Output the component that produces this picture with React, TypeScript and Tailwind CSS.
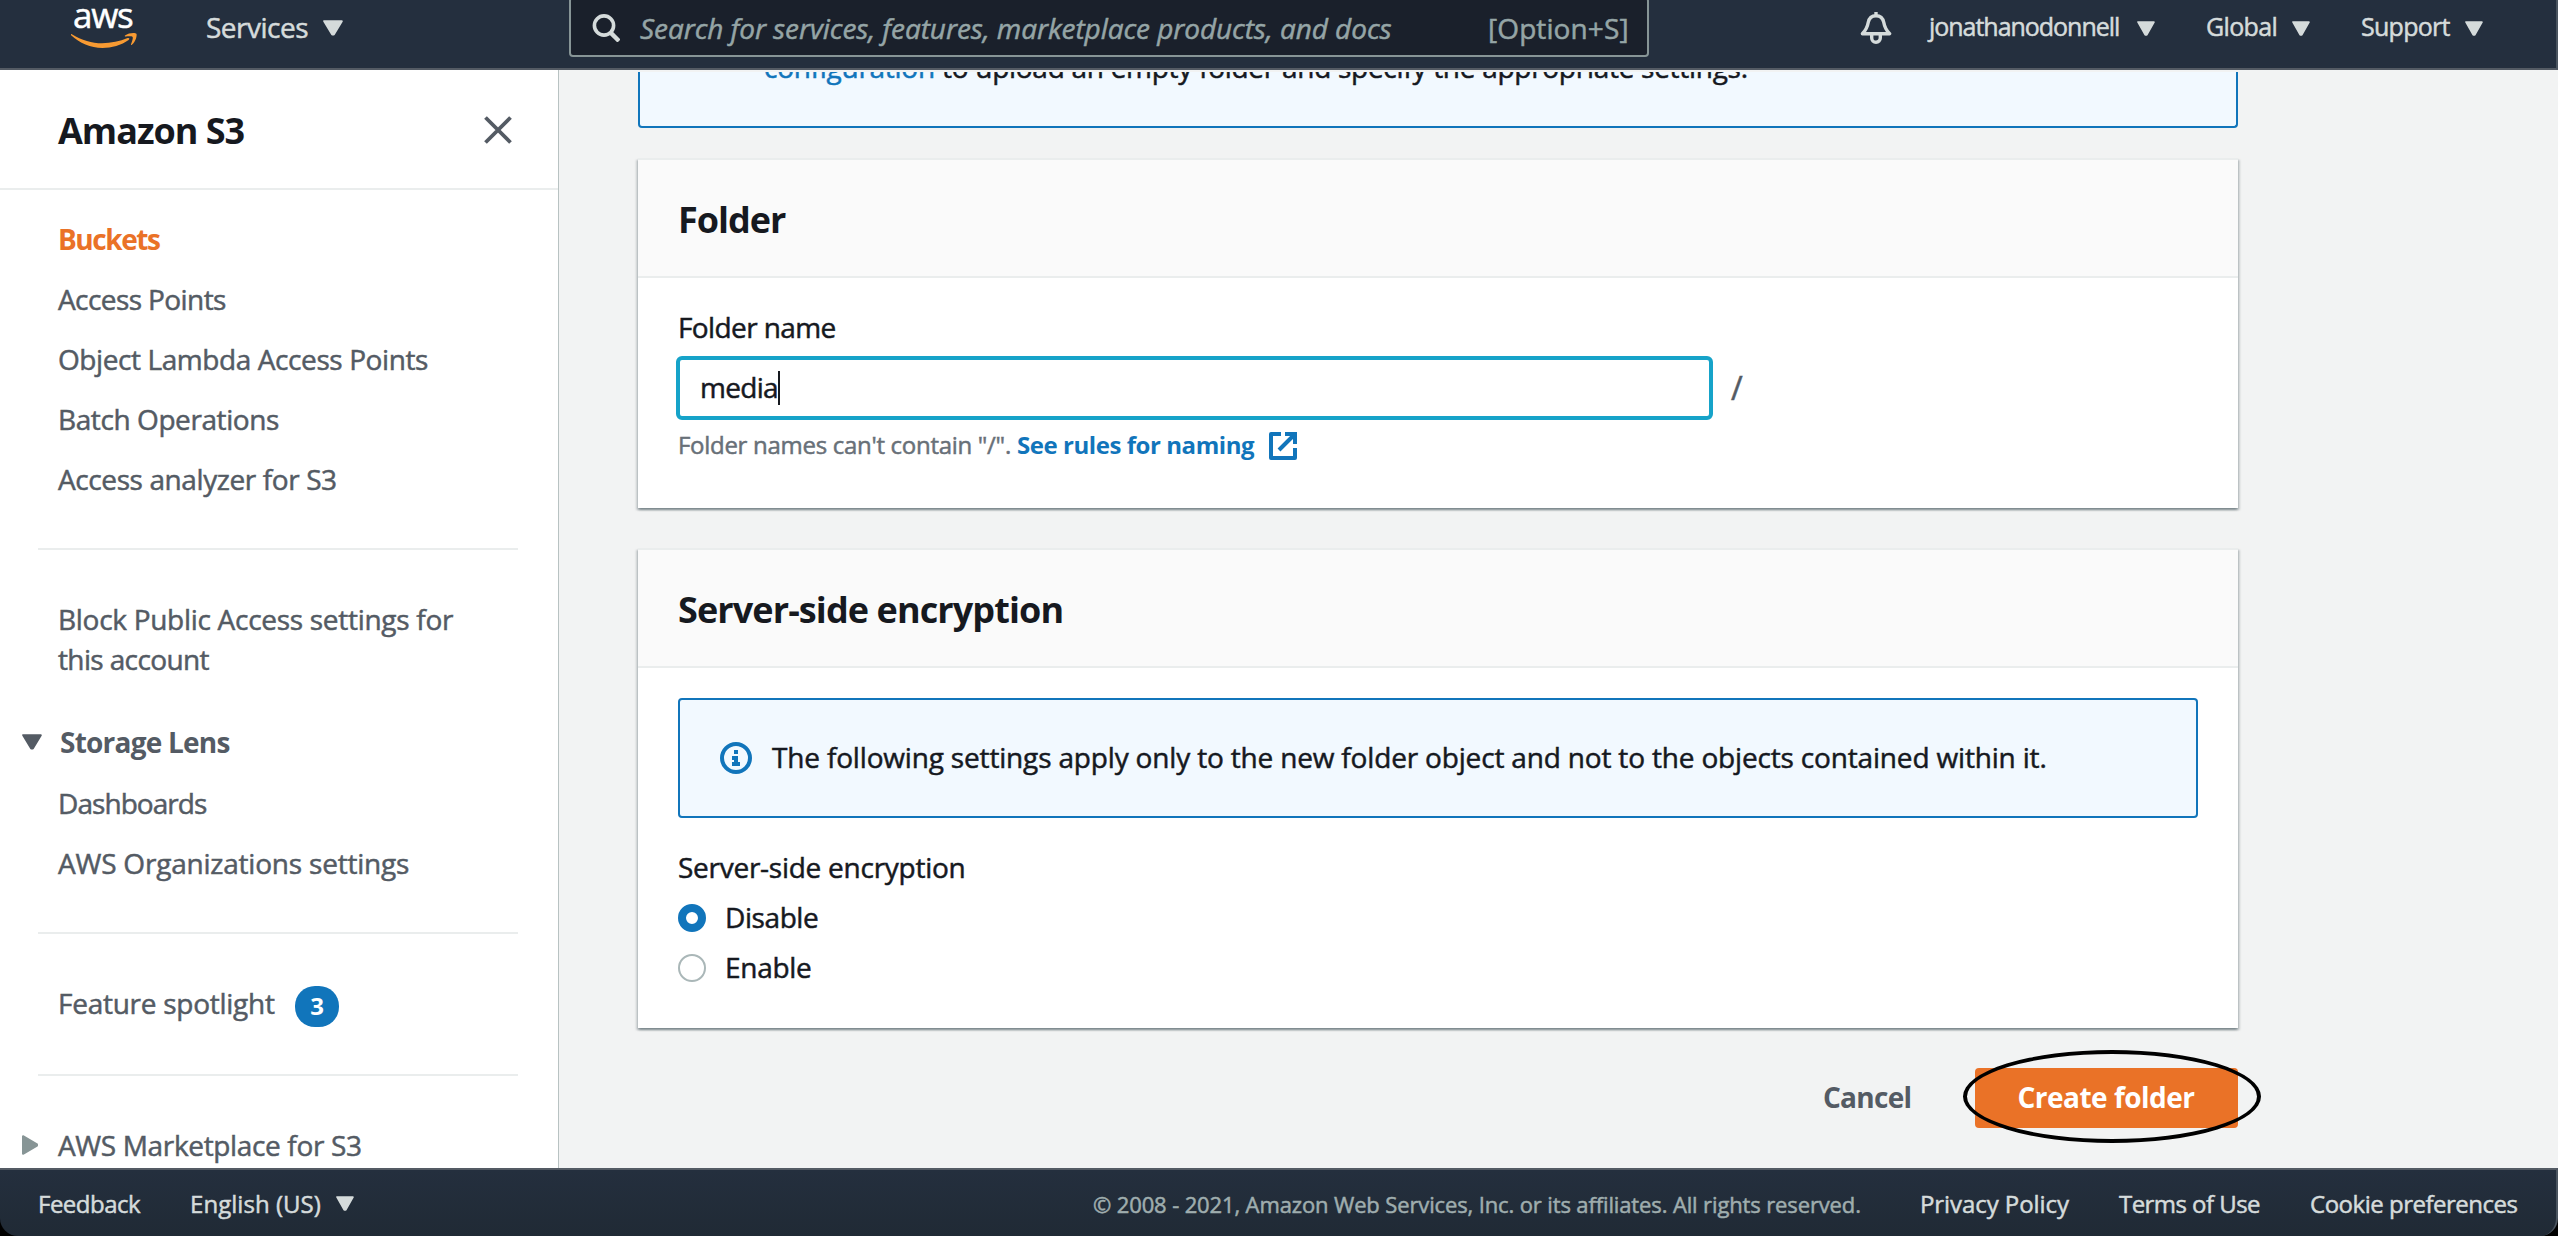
import React from "react";

function Caret({ className }: { className: string }) {
  return (
    <svg viewBox="0 0 20 16" preserveAspectRatio="none" className={`shrink-0 ${className}`} fill="currentColor" stroke="currentColor" strokeWidth="2" strokeLinejoin="round">
      <path d="M1.2 1.2H18.8L10.8 14.6H9.2Z" />
    </svg>
  );
}

function AwsLogo() {
  return (
    <div className="ml-[71px] h-14 w-[67px] shrink-0">
      <div className="mt-px h-7 pl-[2px] text-[35px] leading-[28px] font-medium tracking-[-1.3px] text-white">aws</div>
      <svg viewBox="71 32 67 17" className="mt-[3px] h-[17px] w-[67px]" fill="#f79a32">
        <path d="M71.4 34C82 40.4 92 43.2 102 43.3C111 43.3 120 41.3 127.6 38.1C129.3 37.5 130 38.9 128.6 40C121.5 45.3 111.5 48 102.5 48C90.5 48 79.6 43 71.1 35.3C70.3 34.5 70.6 33.6 71.4 34Z" />
        <path d="M125 35.5C128.5 32.6 135.5 32.4 136.4 33.7C137.3 35.2 135.8 41.5 131.9 44.8C131.2 45.2 130.7 45 131 44.2C132 41.5 133.3 37.8 132.6 36.9C131.9 36 128 36.2 125.8 36.5C124.9 36.6 124.5 36 125 35.5Z" />
      </svg>
    </div>
  );
}

function Header() {
  return (
    <header className="flex h-[70px] shrink-0 items-center border-r-2 border-b-2 border-r-[#4a545f] border-b-[#545b64] bg-[#242f3e] pb-3 text-[#d5dbdb]">
      <AwsLogo />
      <div className="ml-[68px] flex items-center">
        <span className="-mt-[2px] w-[117px] text-[28px] leading-10 font-medium tracking-[-0.5px] whitespace-nowrap">Services</span>
        <Caret className="h-4 w-5" />
      </div>
      <div className="-mt-[2px] ml-[226px] flex h-[60px] w-[1080px] shrink-0 items-center rounded-[4px] border-2 border-[#879596] bg-[#1a202b] pt-[2px] text-[28px] leading-10 text-[#95a5a6]">
        <svg viewBox="0 0 28 28" className="ml-[21px] h-7 w-7 shrink-0 text-[#d5dbdb]" fill="none" stroke="currentColor" strokeWidth="3.6">
          <circle cx="12" cy="11.5" r="9.6" />
          <path d="M18.6 18.6L27 27" strokeWidth="4.4" />
        </svg>
        <span className="ml-[20px] w-[848px] tracking-[-0.07px] whitespace-nowrap italic">Search for services, features, marketplace products, and docs</span>
        <span className="tracking-[0.1px] whitespace-nowrap">[Option+S]</span>
      </div>
      <svg viewBox="0 0 32 33" className="ml-[211px] h-[33px] w-8 shrink-0" fill="none" stroke="currentColor" strokeWidth="3.4" strokeLinejoin="round">
        <path d="M16 0V4M2.4 21.8C7 17 7.6 14 8.2 10.5C9.2 5.7 12 3.7 16 3.7C20 3.7 22.8 5.7 23.8 10.5C24.4 14 25 17 29.6 21.8Z" />
        <path d="M11.7 22V26A4.3 4.3 0 0 0 20.3 26V22" />
      </svg>
      <div className="ml-[37px] flex items-center gap-[51px] text-[25px] leading-10 font-medium">
        <div className="flex items-center">
          <span className="-mt-1 w-[208px] tracking-[-1.03px] whitespace-nowrap">jonathanodonnell</span>
          <Caret className="h-[15px] w-[18px]" />
        </div>
        <div className="flex items-center">
          <span className="-mt-1 w-[86px] tracking-[-0.64px] whitespace-nowrap">Global</span>
          <Caret className="h-[15px] w-[18px]" />
        </div>
        <div className="flex items-center">
          <span className="-mt-1 w-[104px] tracking-[-0.73px] whitespace-nowrap">Support</span>
          <Caret className="h-[15px] w-[18px]" />
        </div>
      </div>
    </header>
  );
}

function Divider({ className }: { className: string }) {
  return <hr className={`mr-10 ml-[38px] h-[2px] shrink-0 border-0 bg-[#eaeded] ${className}`} />;
}

function Sidebar() {
  return (
    <aside className="z-10 flex w-[559px] shrink-0 flex-col overflow-hidden border-r border-[#b8c2c2] bg-white text-[28px] whitespace-nowrap text-[#545b64]">
      <div className="flex h-[120px] shrink-0 items-center justify-between border-b-2 border-[#eaeded] pr-[46px] pl-[58px]">
        <h2 className="mt-1 text-[36px] leading-[44px] font-bold tracking-[-1px] text-[#16191f] [-webkit-text-stroke:0px]">Amazon S3</h2>
        <svg viewBox="0 0 28 28" className="mt-[2px] h-7 w-7" stroke="currentColor" strokeWidth="3.8">
          <path d="M1.5 1.5L26.5 26.5M26.5 1.5L1.5 26.5" />
        </svg>
      </div>
      <ul className="mt-[19px] shrink-0 pl-[58px] leading-[60px]">
        <li className="font-bold tracking-[-1.45px] text-[#ea7227] [-webkit-text-stroke:0px]">Buckets</li>
        <li className="tracking-[-0.59px]">Access Points</li>
        <li className="tracking-[-0.41px]">Object Lambda Access Points</li>
        <li className="tracking-[-0.41px]">Batch Operations</li>
        <li className="tracking-[-0.4px]">Access analyzer for S3</li>
      </ul>
      <Divider className="mt-[39px]" />
      <div className="mt-[49px] shrink-0 pl-[58px] leading-10">
        <div className="tracking-[-0.29px]">Block Public Access settings for</div>
        <div className="tracking-[-0.63px]">this account</div>
      </div>
      <div className="mt-[43px] flex h-10 shrink-0 items-center pl-[22px]">
        <Caret className="h-4 w-5" />
        <span className="ml-[18px] leading-10 font-bold tracking-[-0.77px] [-webkit-text-stroke:0px]">Storage Lens</span>
      </div>
      <ul className="mt-[11px] shrink-0 pl-[58px] leading-[60px]">
        <li className="tracking-[-0.94px]">Dashboards</li>
        <li className="tracking-[-0.21px]">AWS Organizations settings</li>
      </ul>
      <Divider className="mt-[39px]" />
      <div className="mt-10 flex h-[60px] shrink-0 items-center pl-[58px]">
        <span className="-mt-[2px] w-[237px] leading-[58px] tracking-[-0.26px]">Feature spotlight</span>
        <span className="mt-1 flex h-[41px] w-11 items-center justify-center rounded-[20px] bg-[#1175bb] text-[24px] leading-10 font-bold text-white [-webkit-text-stroke:0px]">3</span>
      </div>
      <Divider className="mt-10" />
      <div className="mt-[39px] flex h-[60px] shrink-0 items-center pl-[22px]">
        <svg viewBox="0 0 16 20" className="h-5 w-4 text-[#879596]" fill="currentColor" stroke="currentColor" strokeWidth="2" strokeLinejoin="round">
          <path d="M1 1.2V18.8L15 10.6V9.4Z" />
        </svg>
        <span className="ml-5 tracking-[-0.35px]">AWS Marketplace for S3</span>
      </div>
    </aside>
  );
}

function Card({ title, titleClass, className, children }: { title: string; titleClass: string; className: string; children: React.ReactNode }) {
  return (
    <section className={`border-t-2 border-[#eaeded] bg-white shadow-[0_2px_2px_0_rgba(0,28,36,0.3),2px_2px_2px_0_rgba(0,28,36,0.15),-2px_2px_2px_0_rgba(0,28,36,0.15)] ${className}`}>
      <div className="flex h-[118px] items-center border-b-2 border-[#eaeded] bg-[#fafafa] pl-10">
        <h2 className={`mt-[3px] text-[36px] leading-[44px] font-bold [-webkit-text-stroke:0px] ${titleClass}`}>{title}</h2>
      </div>
      <div className="px-10">{children}</div>
    </section>
  );
}

function ExternalIcon() {
  return (
    <svg viewBox="0 0 28 28" className="mt-px ml-[15px] h-7 w-7" fill="none" stroke="currentColor" strokeWidth="4">
      <path d="M12 2H2V26H26V16" strokeLinejoin="round" />
      <path d="M16 2H26V12M26 2L10 18" />
    </svg>
  );
}

function InfoIcon() {
  return (
    <svg viewBox="0 0 32 32" className="h-8 w-8 shrink-0 text-[#1175bb]" fill="currentColor">
      <circle cx="16" cy="16" r="14" fill="none" stroke="currentColor" strokeWidth="4" />
      <path d="M14 8H18V12H14ZM12 14H18V20H20V24H12V20H14V18H12Z" />
    </svg>
  );
}

function Main() {
  return (
    <main className="flex min-w-0 flex-1 flex-col pt-[2px] pl-[79px] text-[28px] leading-10 whitespace-nowrap text-[#16191f]">
      <div className="h-14 w-[1600px] shrink-0 overflow-hidden rounded-b-[4px] border-2 border-t-0 border-[#1175bb] bg-[#f2f9ff]">
        <div className="-mt-[25px] pl-[124px]">
          <span className="inline-block w-[178px] font-medium tracking-[-0.27px] text-[#1175bb]">configuration</span>
          <span className="tracking-[-0.28px]">to upload an empty folder and specify the appropriate settings.</span>
        </div>
      </div>

      <Card title="Folder" titleClass="tracking-[-1.02px]" className="mt-[30px] h-[350px] w-[1600px] shrink-0">
        <div className="pt-[29px] tracking-[-0.61px]">Folder name</div>
        <div className="mt-[9px] -ml-[2px] flex items-center">
          <div className="flex h-16 w-[1037px] items-center rounded-[6px] border-4 border-[#16a3c9] bg-white pl-[20px]">
            <span className="-mt-[2px] tracking-[-0.71px]">media</span>
            <span className="h-[34px] w-[2px] bg-[#16191f]" />
          </div>
          <span className="ml-[18px] text-[32px] text-[#545b64]">/</span>
        </div>
        <div className="mt-[9px] flex items-center text-[24px] leading-8">
          <span className="w-[339px] tracking-[-0.29px] text-[#687078]">Folder names can't contain "/".</span>
          <span className="flex items-center font-bold tracking-[-0.44px] text-[#1175bb] [-webkit-text-stroke:0px]">
            See rules for naming
            <ExternalIcon />
          </span>
        </div>
      </Card>

      <Card title="Server-side encryption" titleClass="tracking-[-0.9px]" className="mt-10 h-[480px] w-[1600px] shrink-0">
        <div className="mt-[30px] flex h-[120px] items-center rounded-[4px] border-2 border-[#1175bb] bg-[#f2f9ff] pl-10">
          <InfoIcon />
          <span className="-mt-[3px] ml-5 tracking-[-0.17px]">The following settings apply only to the new folder object and not to the objects contained within it.</span>
        </div>
        <div className="mt-[29px] tracking-[-0.26px]">Server-side encryption</div>
        <div className="mt-[6px] flex h-[50px] items-center">
          <span className="h-7 w-7 rounded-full border-[8px] border-[#1175bb] bg-white" />
          <span className="-mt-[2px] ml-[19px] tracking-[-0.41px]">Disable</span>
        </div>
        <div className="flex h-[50px] items-center">
          <span className="h-7 w-7 rounded-full border-2 border-[#aab7b8] bg-white" />
          <span className="-mt-[2px] ml-[19px] tracking-[-0.3px]">Enable</span>
        </div>
      </Card>

      <div className="mt-10 flex h-[60px] w-[1600px] shrink-0 items-center justify-end font-bold [-webkit-text-stroke:0px]">
        <span className="-mt-[2px] w-[152px] tracking-[-0.72px] text-[#545b64]">Cancel</span>
        <button className="relative flex h-[60px] w-[263px] items-center justify-center rounded-[4px] bg-[#ea7227] pr-px text-white">
          <span className="-mt-[2px] tracking-[-0.5px]">Create folder</span>
          <span className="absolute -top-[18px] -left-3 h-[93px] w-[298px] rounded-[50%] border-4 border-black" />
        </button>
      </div>
    </main>
  );
}

function Footer() {
  return (
    <footer className="flex h-[68px] shrink-0 items-center rounded-b-[18px] border-t-2 border-r-2 border-t-[#545b64] border-r-[#4a545f] bg-linear-to-b from-[#242f3e] to-[#202a35] pt-px text-[24px] leading-8 font-medium whitespace-nowrap text-[#d5dbdb]">
      <span className="ml-[38px] w-[152px] tracking-[-0.51px]">Feedback</span>
      <span className="w-[146px] tracking-[0.04px]">English (US)</span>
      <Caret className="-mt-px h-[15px] w-[18px]" />
      <span className="ml-[739px] w-[827px] text-[22px] font-normal tracking-[-0.13px] text-[#9fadae]">
        © 2008 - 2021, Amazon Web Services, Inc. or its affiliates. All rights reserved.
      </span>
      <span className="w-[199px] tracking-[-0.07px]">Privacy Policy</span>
      <span className="w-[191px] tracking-[-0.55px]">Terms of Use</span>
      <span className="tracking-[-0.49px]">Cookie preferences</span>
    </footer>
  );
}

export default function App() {
  return (
    <div className="flex h-[1236px] w-[2558px] flex-col overflow-hidden bg-black font-['Open_Sans',sans-serif] [-webkit-text-stroke:0.5px]">
      <Header />
      <div className="flex min-h-0 flex-1 overflow-hidden bg-[#f2f3f3]">
        <Sidebar />
        <Main />
      </div>
      <Footer />
    </div>
  );
}
